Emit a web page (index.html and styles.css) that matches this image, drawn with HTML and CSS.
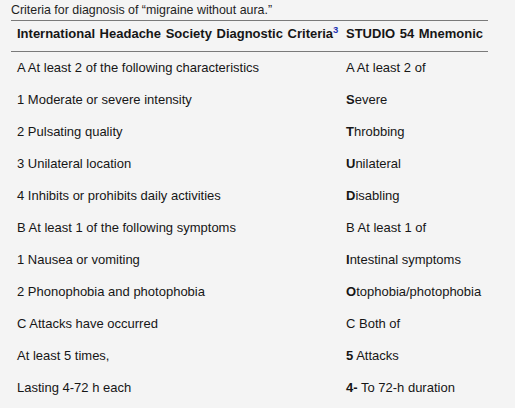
FILE: index.html
```html
<!DOCTYPE html>
<html lang="en">
<head>
<meta charset="utf-8">
<title>Criteria for diagnosis of migraine without aura</title>
<link rel="stylesheet" href="styles.css">
</head>
<body>
<div class="figure">
  <p class="caption">Criteria for diagnosis of “migraine without aura.”</p>
  <div class="table">
    <div class="cell head c1">International Headache Society Diagnostic Criteria<sup class="ref">3</sup></div>
    <div class="cell head c2">STUDIO 54 Mnemonic</div>

    <div class="cell c1">A At least 2 of the following characteristics</div>
    <div class="cell c2">A At least 2 of</div>

    <div class="cell c1">1 Moderate or severe intensity</div>
    <div class="cell c2"><b>S</b>evere</div>

    <div class="cell c1">2 Pulsating quality</div>
    <div class="cell c2"><b>T</b>hrobbing</div>

    <div class="cell c1">3 Unilateral location</div>
    <div class="cell c2"><b>U</b>nilateral</div>

    <div class="cell c1">4 Inhibits or prohibits daily activities</div>
    <div class="cell c2"><b>D</b>isabling</div>

    <div class="cell c1">B At least 1 of the following symptoms</div>
    <div class="cell c2">B At least 1 of</div>

    <div class="cell c1">1 Nausea or vomiting</div>
    <div class="cell c2"><b>I</b>ntestinal symptoms</div>

    <div class="cell c1">2 Phonophobia and photophobia</div>
    <div class="cell c2"><b>O</b>tophobia/photophobia</div>

    <div class="cell c1">C Attacks have occurred</div>
    <div class="cell c2">C Both of</div>

    <div class="cell c1">At least 5 times,</div>
    <div class="cell c2"><b>5</b> Attacks</div>

    <div class="cell c1">Lasting 4-72 h each</div>
    <div class="cell c2"><b>4-</b> To 72-h duration</div>
  </div>
</div>
</body>
</html>
```
FILE: styles.css
```css
html, body {
  margin: 0;
  padding: 0;
  background: #f4f4f4;
}
body {
  font-family: "Liberation Sans", Arial, sans-serif;
  color: #161616;
  padding: 4px 0 0 11px;
}
.figure {
  width: 477px;
}
.caption {
  margin: 0 0 3px 0;
  font-size: 12.4px;
  line-height: 13px;
  color: #1e1e1e;
}
.table {
  display: grid;
  grid-template-columns: 335px 1fr;
  border-top: 1px solid #7a7a7a;
}
.cell {
  font-size: 13px;
  line-height: 32px;
  white-space: nowrap;
}
.c1 {
  padding-left: 6px;
}
.head {
  font-weight: bold;
  line-height: 15px;
  padding-top: 5px;
  padding-bottom: 10px;
  border-bottom: 1px solid #7a7a7a;
  word-spacing: 1px;
}
.ref {
  color: #1f33b3;
  font-size: 9.5px;
  line-height: 0;
  vertical-align: 5px;
}
b {
  font-weight: bold;
}
```
